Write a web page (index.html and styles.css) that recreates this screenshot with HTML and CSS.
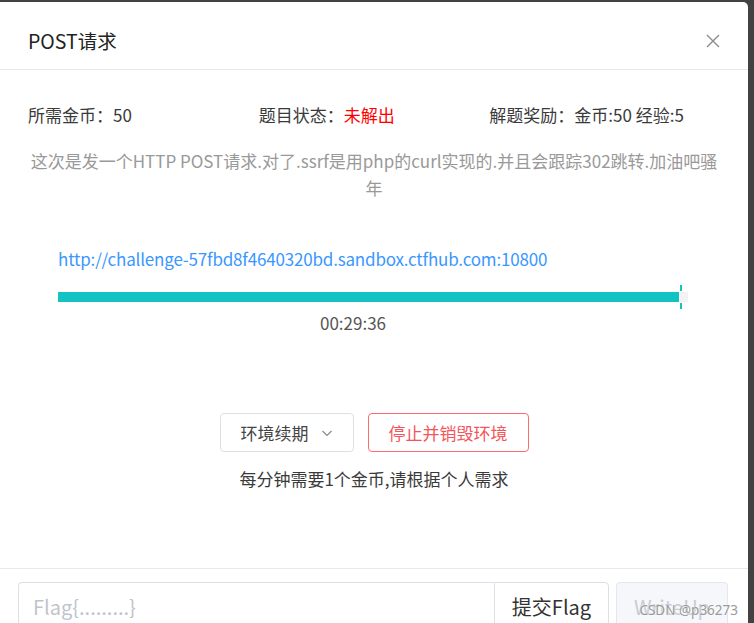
FILE: index.html
```html
<!DOCTYPE html>
<html lang="zh-CN">
<head>
<meta charset="utf-8">
<title>POST请求</title>
<link rel="stylesheet" href="styles.css">
</head>
<body>
<div class="frame">
  <div class="modal">
    <header class="head">
      <h1 class="title">POST请求</h1>
      <button class="close" aria-label="关闭">
        <svg width="14" height="14" viewBox="0 0 14 14"><path d="M1 1L13 13M13 1L1 13" stroke="#8c8c8c" stroke-width="1.4" fill="none"/></svg>
      </button>
    </header>
    <main class="body">
      <div class="info">
        <div class="cell">所需金币：50</div>
        <div class="cell">题目状态：<span class="red">未解出</span></div>
        <div class="cell">解题奖励：金币:50 经验:5</div>
      </div>
      <p class="desc">这次是发一个HTTP POST请求.对了.ssrf是用php的curl实现的.并且会跟踪302跳转.加油吧骚年</p>
      <div class="env">
        <a class="url" href="#">http://challenge-57fbd8f4640320bd.sandbox.ctfhub.com:10800</a>
        <div class="progress">
          <div class="track"><div class="fill" style="width:98.8%"></div></div>
          <span class="marker"></span>
        </div>
        <div class="time">00:29:36</div>
      </div>
      <div class="actions">
        <button class="btn btn-default">环境续期
          <svg class="caret" width="12" height="12" viewBox="0 0 12 12"><path d="M1.5 4L6 8.5L10.5 4" stroke="#888" stroke-width="1.2" fill="none"/></svg>
        </button>
        <button class="btn btn-danger">停止并销毁环境</button>
      </div>
      <p class="note">每分钟需要1个金币,请根据个人需求</p>
    </main>
    <footer class="foot">
      <div class="group">
        <input class="flag" type="text" placeholder="Flag{.........}">
        <button class="submit">提交Flag</button>
      </div>
      <button class="wu" disabled>WriteUp</button>
    </footer>
  </div>
  <span class="watermark">CSDN @p36273</span>
</div>
</body>
</html>
```

FILE: styles.css
```css
html, body {
  margin: 0;
  padding: 0;
  height: 100%;
  overflow: hidden;
  background: #424242;
}
body {
  font-family: "Noto Sans CJK SC", "Noto Sans", sans-serif;
  color: #333;
}
.frame {
  position: relative;
  height: 100%;
}
.modal {
  margin-top: 2px;
  width: 748px;
  background: #fff;
  border-radius: 0 5px 0 0;
  height: 640px;
}
.head {
  box-sizing: border-box;
  height: 68px;
  padding: 10px 28px 0 28px;
  display: flex;
  align-items: center;
  justify-content: space-between;
  border-bottom: 1px solid #e8e8e8;
}
.title {
  margin: 0;
  font-size: 19.5px;
  font-weight: 400;
  line-height: 30px;
  color: #222;
}
.close {
  border: 0;
  background: none;
  padding: 0;
  width: 14px;
  height: 14px;
  display: flex;
}
.body {
  padding: 33px 28px 77px;
}
.info {
  display: grid;
  grid-template-columns: repeat(3, 1fr);
  font-size: 17px;
  line-height: 24px;
  color: #3a3a3a;
}
.red { color: #ff0000; }
.desc {
  margin: 20px 0 0;
  text-align: center;
  font-size: 17px;
  line-height: 27px;
  color: #999;
}
.env {
  margin: 46px 32px 0 30px;
}
.url {
  display: block;
  font-size: 17px;
  line-height: 24px;
  letter-spacing: -0.18px;
  color: #3a97ff;
  text-decoration: none;
}
.progress {
  position: relative;
  margin-top: 21px;
}
.track {
  height: 10px;
  background: #f2f2f2;
}
.fill {
  height: 10px;
  background: #13c2c2;
  border-right: 1px solid #fff;
  box-sizing: border-box;
}
.marker {
  position: absolute;
  left: 622px;
  top: -7px;
  width: 2px;
  height: 24px;
  background: linear-gradient(#13c2c2 0 6px, transparent 6px 18px, #13c2c2 18px 24px);
}
.time {
  margin: 9px 40px 0 0;
  text-align: center;
  font-size: 17px;
  line-height: 24px;
  color: #555;
}
.actions {
  margin-top: 78px;
  display: flex;
  justify-content: center;
  gap: 14px;
}
.btn {
  box-sizing: border-box;
  height: 39px;
  border-radius: 4px;
  background: #fff;
  font-family: inherit;
  font-size: 17px;
  display: flex;
  align-items: center;
  justify-content: center;
}
.btn-default {
  width: 134px;
  border: 1px solid #dcdfe6;
  color: #444;
  gap: 12px;
}
.btn-danger {
  width: 161px;
  border: 1px solid #ff6b6b;
  color: #f5545a;
}
.note {
  margin: 15px 0 0;
  text-align: center;
  font-size: 17px;
  line-height: 24px;
  color: #3a3a3a;
}
.foot {
  border-top: 1px solid #e8e8e8;
  padding: 13px 20px 0 18px;
  display: flex;
  gap: 7px;
}
.group {
  display: flex;
}
.flag {
  box-sizing: border-box;
  width: 476px;
  height: 48px;
  border: 1px solid #dcdfe6;
  border-right: 0;
  border-radius: 4px 0 0 4px;
  padding: 0 14px;
  font-family: inherit;
  font-size: 20px;
  color: #333;
  outline: none;
}
.flag::placeholder { color: #bfc4cc; }
.submit {
  box-sizing: border-box;
  width: 115px;
  height: 48px;
  border: 1px solid #dcdfe6;
  border-radius: 0 4px 4px 0;
  background: #fff;
  font-family: inherit;
  font-size: 20px;
  color: #333;
  padding: 0;
}
.wu {
  box-sizing: border-box;
  width: 112px;
  height: 48px;
  border: 1px solid #e4e7ed;
  border-radius: 4px;
  background: #f5f7fa;
  font-family: inherit;
  font-size: 20px;
  color: #c8ccd2;
  padding: 0;
}
.watermark {
  position: absolute;
  right: 16px;
  bottom: 6px;
  font-family: "Noto Sans", sans-serif;
  font-size: 13.5px;
  color: #9a9a9a;
  text-shadow: 0 0 2px #fff;
}
```
